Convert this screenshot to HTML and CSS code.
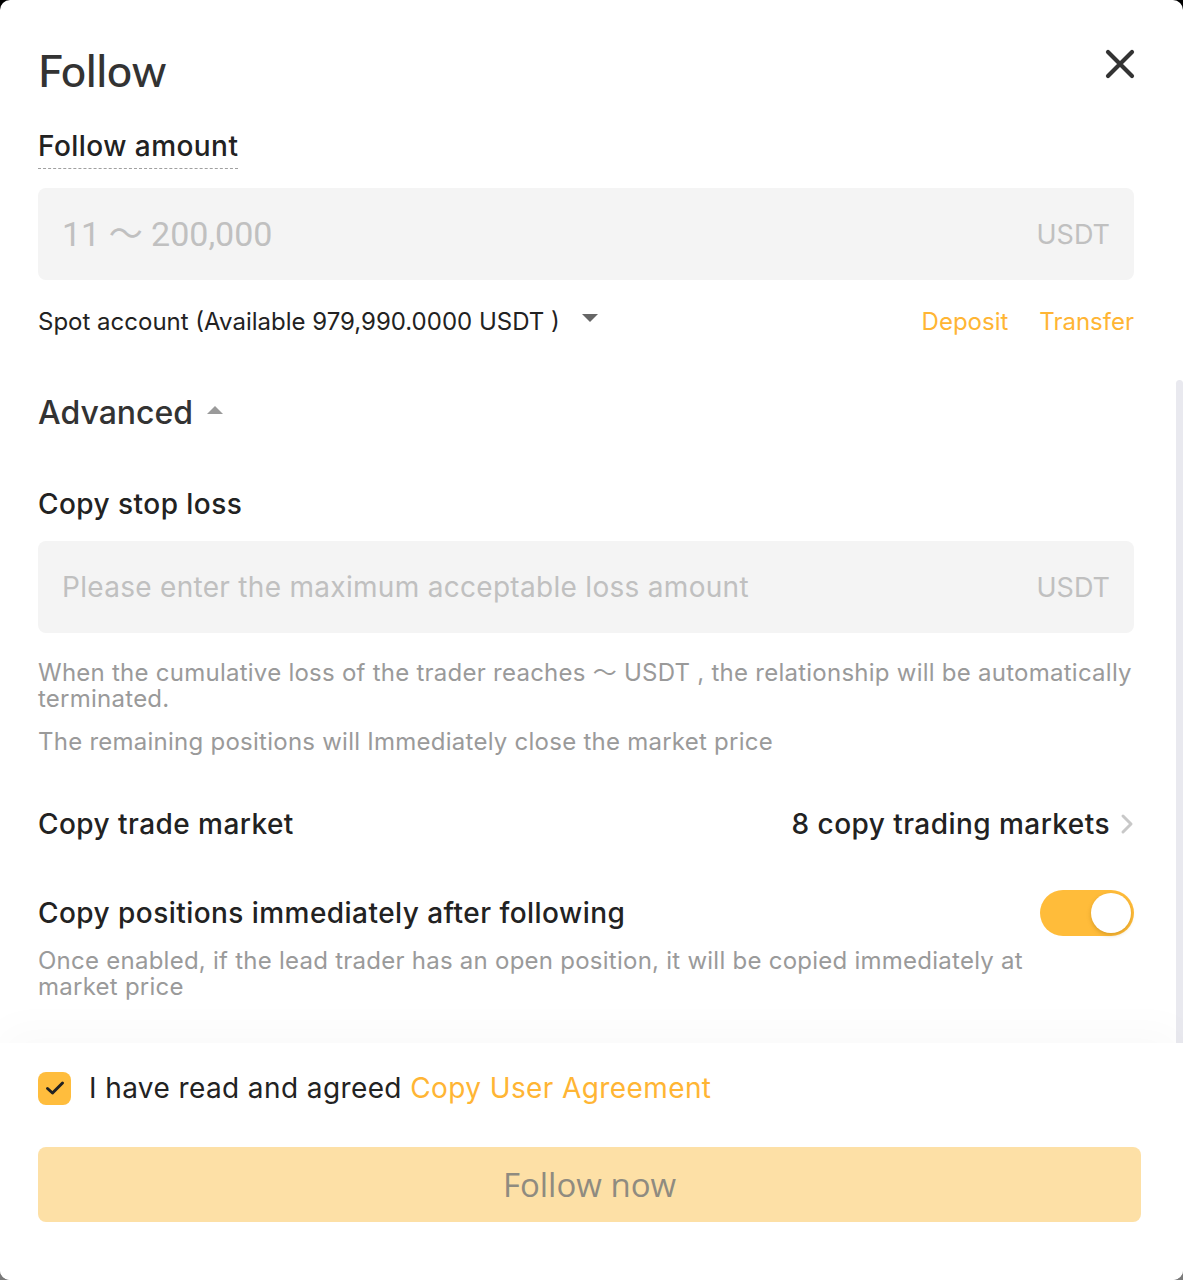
FILE: index.html
```html
<!DOCTYPE html>
<html lang="en">
<head>
<meta charset="utf-8">
<title>Follow</title>
<link rel="stylesheet" href="styles.css">
</head>
<body>
<div class="modal">
  <div class="header">
    <h1 class="title">Follow</h1>
    <span class="close" aria-label="Close">
      <svg width="30" height="30" viewBox="0 0 30 30"><path d="M3 3 L27 27 M27 3 L3 27" stroke="#333" stroke-width="4.2" stroke-linecap="round" fill="none"/></svg>
    </span>
  </div>
  <div class="body">
    <div class="scroll">
      <div class="label-row"><span class="label dashed">Follow amount</span></div>
      <div class="input">
        <span class="placeholder big">11 <span class="tilde">～</span> 200,000</span>
        <span class="unit">USDT</span>
      </div>
      <div class="account-row">
        <div class="account">
          <span>Spot account (Available 979,990.0000 USDT )</span>
          <svg class="caret" width="16" height="10" viewBox="0 0 16 10"><path d="M0 1 L16 1 L8 9 Z" fill="#666"/></svg>
        </div>
        <div class="links">
          <span class="link">Deposit</span>
          <span class="link">Transfer</span>
        </div>
      </div>
      <div class="advanced">
        <span>Advanced</span>
        <svg class="caret-up" width="16" height="10" viewBox="0 0 16 10"><path d="M0 9 L16 9 L8 1 Z" fill="#9a9a9a"/></svg>
      </div>
      <div class="label-row stop"><span class="label">Copy stop loss</span></div>
      <div class="input">
        <span class="placeholder">Please enter the maximum acceptable loss amount</span>
        <span class="unit">USDT</span>
      </div>
      <p class="hint first">When the cumulative loss of the trader reaches <span class="tilde">～</span> USDT , the relationship will be automatically terminated.</p>
      <p class="hint second">The remaining positions will Immediately close the market price</p>
      <div class="row market">
        <span class="label">Copy trade market</span>
        <span class="value">8 copy trading markets
          <svg class="chev" width="14" height="22" viewBox="0 0 14 22"><path d="M3 3 L11 11 L3 19" stroke="#c8c8c8" stroke-width="3" fill="none" stroke-linecap="round" stroke-linejoin="round"/></svg>
        </span>
      </div>
      <div class="row positions">
        <span class="label">Copy positions immediately after following</span>
        <span class="toggle"><span class="knob"></span></span>
      </div>
      <p class="hint desc">Once enabled, if the lead trader has an open position, it will be copied immediately at market price</p>
    </div>
    <div class="scrollbar"><div class="thumb"></div></div>
  </div>
  <div class="footer">
    <div class="agree">
      <span class="checkbox">
        <svg width="20" height="16" viewBox="0 0 20 16"><path d="M2.5 8.5 L7.5 13 L17.5 3" stroke="#222" stroke-width="3" fill="none" stroke-linecap="round" stroke-linejoin="round"/></svg>
      </span>
      <span class="agree-text">I have read and agreed <span class="link">Copy User Agreement</span></span>
    </div>
    <button class="submit">Follow now</button>
  </div>
</div>
</body>
</html>
```

FILE: styles.css
```css
* { box-sizing: border-box; }
html, body { margin: 0; padding: 0; height: 100%; }
body {
  background: linear-gradient(#000 0%, #000 50%, #7a7a7a 100%);
  font-family: "Inter", "Noto Sans", sans-serif;
  color: #222;
}
.modal {
  width: 1183px;
  height: 1280px;
  background: #fff;
  border-radius: 10px;
  display: flex;
  flex-direction: column;
  overflow: hidden;
}
.header {
  display: flex;
  justify-content: space-between;
  align-items: flex-start;
  padding: 40px 48px 0 38px;
  height: 128px;
}
.title {
  margin: 0;
  font-family: "Lato", sans-serif;
  font-size: 44px;
  line-height: 60px;
  font-weight: 500;
  color: #333;
}
.close { display: flex; margin-top: 9px; }
.body {
  display: flex;
  flex: 1;
  min-height: 0;
}
.scroll {
  flex: 1;
  padding: 0 42px 44px 38px;
}
.scrollbar {
  width: 7px;
  display: flex;
  flex-direction: column;
  justify-content: flex-end;
}
.thumb {
  height: 663px;
  background: #e9e9ef;
  border-radius: 4px 4px 0 0;
}
.label-row { display: flex; }
.label {
  font-size: 28px;
  line-height: 36px;
  font-weight: 500;
  letter-spacing: 0.45px;
  color: #222;
}
.dashed {
  padding-bottom: 4px;
  border-bottom: 1.5px dashed #a0a0a0;
}
.input {
  margin-top: 19px;
  height: 92px;
  background: #f4f4f4;
  border-radius: 8px;
  display: flex;
  align-items: center;
  justify-content: space-between;
  padding: 0 24px;
}
.placeholder {
  font-size: 28px;
  line-height: 40px;
  letter-spacing: 0.3px;
  color: #c0c0c0;
}
.placeholder.big { font-size: 34px; letter-spacing: 0; font-family: "Roboto", sans-serif; }
.tilde { font-family: "Noto Sans CJK SC", sans-serif; line-height: 0; }
.unit {
  font-size: 27px;
  color: #c0c0c0;
}
.account-row {
  margin-top: 24px;
  display: flex;
  justify-content: space-between;
  align-items: center;
  height: 34px;
}
.account {
  display: flex;
  align-items: center;
  font-size: 24px;
  color: #222;
}
.caret { margin-left: 22px; margin-top: -6px; }
.links { display: flex; gap: 31px; }
.link { color: #ffb534; font-size: 24px; }
.advanced {
  margin-top: 52px;
  display: flex;
  align-items: center;
  height: 44px;
  font-size: 32px;
  font-weight: 500;
  color: #333;
}
.caret-up { margin-left: 14px; margin-top: -4px; }
.stop { margin-top: 52px; }
.hint {
  margin: 0;
  font-size: 24px;
  line-height: 26px;
  letter-spacing: 0.25px;
  color: #9a9a9a;
}
.hint.first { margin-top: 27px; }
.hint.second { margin-top: 17px; }
.row {
  display: flex;
  justify-content: space-between;
  align-items: center;
}
.market { margin-top: 51px; }
.value {
  display: flex;
  align-items: center;
  gap: 10px;
  font-size: 28px;
  font-weight: 500;
  letter-spacing: 0.45px;
  color: #222;
}
.positions { margin-top: 48px; }
.toggle {
  width: 94px;
  height: 46px;
  border-radius: 23px;
  background: #ffbc3a;
  display: flex;
  align-items: center;
  justify-content: flex-end;
  padding: 0 3px;
}
.knob {
  width: 40px;
  height: 40px;
  border-radius: 50%;
  background: #fff;
  box-shadow: 0 2px 4px rgba(150, 100, 0, 0.35);
}
.hint.desc { margin-top: 12px; padding-right: 100px; }
.footer {
  padding: 27px 42px 58px 38px;
  background: #fff;
  box-shadow: 0 -14px 40px rgba(0, 0, 0, 0.025);
  z-index: 1;
}
.agree {
  display: flex;
  align-items: center;
  height: 36px;
  gap: 18px;
}
.checkbox {
  width: 33px;
  height: 33px;
  border-radius: 8px;
  background: #ffbd3d;
  display: flex;
  align-items: center;
  justify-content: center;
}
.agree-text { font-size: 28px; letter-spacing: 0.4px; color: #222; }
.agree-text .link { font-size: 28px; }
.submit {
  margin-top: 41px;
  width: 100%;
  height: 75px;
  border: none;
  border-radius: 8px;
  background: #fde0a6;
  font-family: "Open Sans", sans-serif;
  font-size: 33px;
  color: #8f8b80;
  display: block;
}
```
